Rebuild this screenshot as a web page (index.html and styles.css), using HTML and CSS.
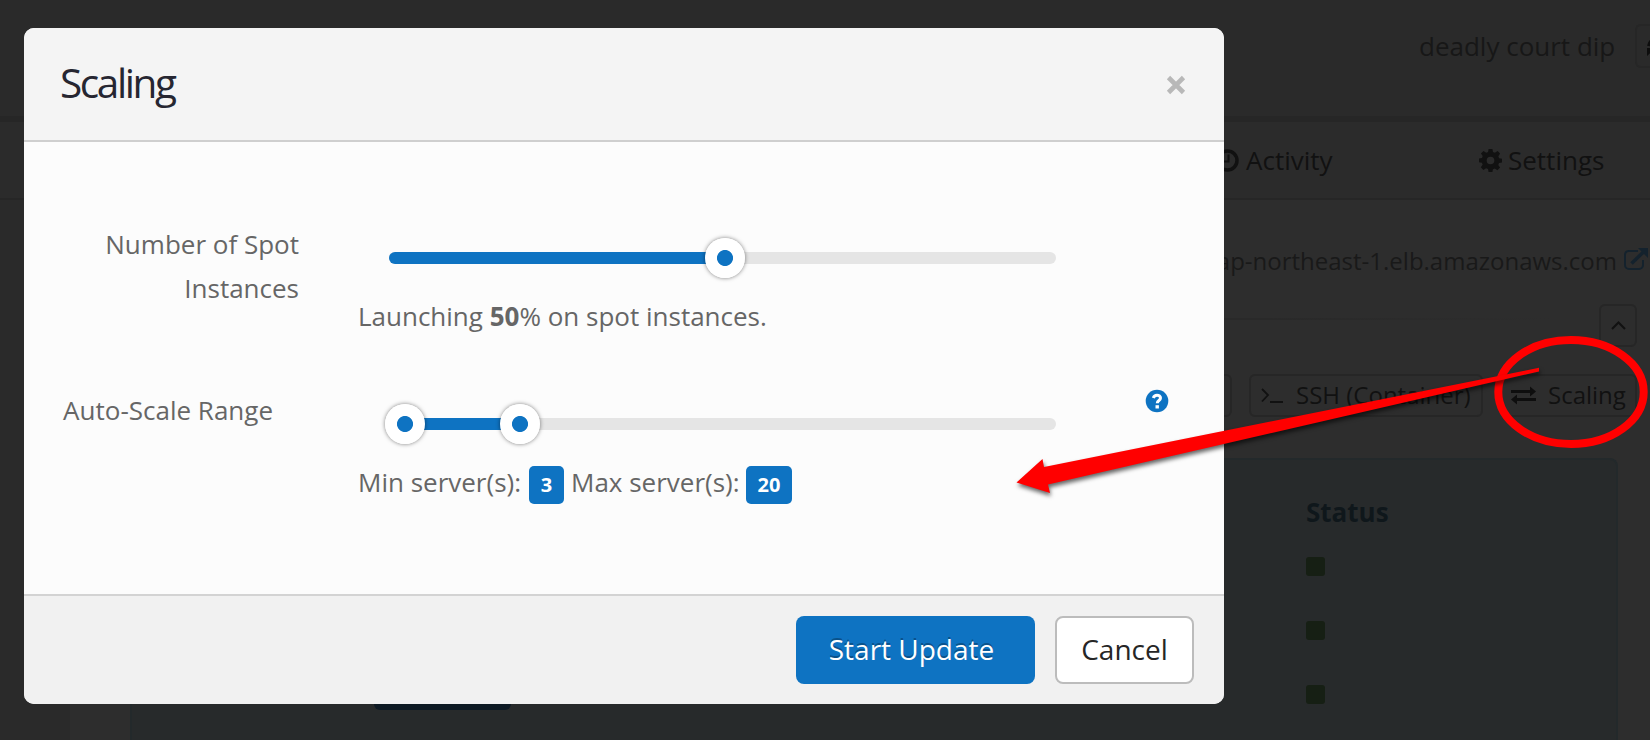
FILE: index.html
```html
<!DOCTYPE html>
<html lang="en">
<head>
<meta charset="utf-8">
<title>Scaling</title>
<link rel="stylesheet" href="styles.css">
</head>
<body>
<div class="page">
  <header class="topbar">
    <span class="app-name">deadly court dip</span>
    <span class="refresh">
      <svg width="22" height="22" viewBox="0 0 22 22"><path d="M2 10A9 9 0 0 1 17 5M20 12A9 9 0 0 1 5 17" fill="none" stroke="#0d0d0d" stroke-width="4"/><path d="M0 12h9l-9 8zM22 2v8h-8z" fill="#0d0d0d"/></svg>
    </span>
  </header>
  <nav class="tabs">
    <a class="tab tab-activity"><svg width="23" height="23" viewBox="0 0 23 23"><circle cx="11.500" cy="11.500" r="9.500" fill="none" stroke="#111" stroke-width="3.500"/><path d="M12.500 5.500v7H8" fill="none" stroke="#111" stroke-width="2"/></svg><span>Activity</span></a>
    <a class="tab tab-settings"><svg width="23" height="23" viewBox="0 0 24 24"><path fill="#111" fill-rule="evenodd" d="M10 0h4l.6 3.200 2 .8L19.400 2.200l2.600 2.600-1.800 2.800.8 2 3 .5v4l-3.100.6-.8 2 1.900 2.700-2.800 2.800-2.700-1.900-2 .8L14 24h-4l-.6-3.200-2-.8-2.800 1.900-2.700-2.800 1.900-2.700-.8-2-3-.5v-4l3.100-.6.8-2L2 4.800l2.700-2.700 2.800 1.900 2-.8zM12 8a4 4 0 1 0 0 8 4 4 0 0 0 0-8z"/></svg><span>Settings</span></a>
  </nav>
  <main class="content">
    <div class="endpoint">
      <span>ap-northeast-1.elb.amazonaws.com</span>
      <svg width="26" height="24" viewBox="0 0 26 24"><path d="M15 4H5.500A4 4 0 0 0 2 8v10a4 4 0 0 0 4 4h10a4 4 0 0 0 4-4v-5" fill="none" stroke="#14222d" stroke-width="2"/><path d="M8.500 16.500 21 4.500" stroke="#14222d" stroke-width="3.500"/><path d="M15 1h10v10z" fill="#14222d"/></svg>
    </div>
    <div class="divider-row">
      <div class="rule"></div>
      <span class="btn-dim collapse"><svg width="15" height="9" viewBox="0 0 15 9"><path d="m1 8 6.500-6.500L14 8" fill="none" stroke="#111" stroke-width="2"/></svg></span>
    </div>
    <div class="actions">
      <span class="btn-dim spare"></span>
      <span class="btn-dim ssh"><svg width="23" height="17" viewBox="0 0 23 17"><path d="m1 2 6 6-6 6.500M9 15h13" fill="none" stroke="#111" stroke-width="1.800"/></svg><span>SSH (Container)</span></span>
      <span class="btn-dim scale"><svg width="25" height="19" viewBox="0 0 25 19"><path fill="#0e0e0e" d="M0 4h19V.5l6 5-6 5V7H0zM25 12v3H6v3.500l-6-5 6-5V12z"/></svg><span>Scaling</span></span>
    </div>
    <section class="nodes">
      <div class="node-button"></div>
      <div class="status-col">
        <b class="status-title">Status</b>
        <i class="led"></i>
        <i class="led"></i>
        <i class="led"></i>
      </div>
    </section>
  </main>
</div>

<div class="modal">
  <div class="modal-header">
    <h1 class="modal-title">Scaling</h1>
    <svg class="close" width="20" height="20" viewBox="0 0 20 20"><path d="m2.500 2.500 15 15M17.500 2.500l-15 15" stroke="#b8b8b8" stroke-width="4.600"/></svg>
  </div>
  <div class="modal-body">
    <div class="field">
      <div class="field-label spot-label">Number of Spot<br>Instances</div>
      <div class="field-control">
        <div class="track"><div class="fill fill-spot"></div><div class="handle handle-spot"></div></div>
        <div class="caption caption-spot">Launching <b>50</b>% on spot instances.</div>
      </div>
    </div>
    <div class="field">
      <div class="field-label range-label">Auto-Scale Range</div>
      <div class="field-control">
        <div class="track"><div class="fill fill-range"></div><div class="handle handle-min"></div><div class="handle handle-max"></div></div>
        <div class="caption range-caption"><span class="min-text">Min server(s):</span><span class="badge badge-min">3</span><span class="max-text">Max server(s):</span><span class="badge badge-max">20</span></div>
      </div>
      <svg class="help" width="24" height="24" viewBox="0 0 24 24"><circle cx="12" cy="12" r="11.300" fill="#0e73c2"/><path d="M8.300 8.900C9 6.900 10.300 6.200 12 6.200c2 0 3.500 1.200 3.500 2.800 0 2.600-3.200 2.400-3.200 5.200" fill="none" stroke="#fff" stroke-width="3"/><path d="M10.500 16.200h3.400v3.300h-3.400z" fill="#fff"/></svg>
    </div>
  </div>
  <div class="modal-footer">
    <button class="btn btn-primary">Start Update</button>
    <button class="btn btn-cancel">Cancel</button>
  </div>
</div>

<svg class="annotation" width="1650" height="740" viewBox="0 0 1650 740">
  <ellipse cx="1571" cy="392" rx="72.700" ry="52" fill="none" stroke="#f00" stroke-width="8"/>
  <path class="arrow" fill="#f00" d="M1016.500 482.500 1042.500 459 1044 467 1539 367.800V371.500L1048 484.500 1050 493z"/>
</svg>
</body>
</html>
```

FILE: styles.css
```css
* { box-sizing: border-box; }

body {
  margin: 0;
  width: 1650px;
  height: 740px;
  overflow: hidden;
  position: relative;
  font-family: "Open Sans", sans-serif;
  font-size: 26px;
  background: #2a2a2a;
}

svg { display: block; flex: none; }

/* Dimmed page behind the dialog */
.page {
  height: 740px;
  display: flex;
  flex-direction: column;
  overflow: hidden;
  color: #111;
  white-space: nowrap;
}

.topbar {
  height: 116px;
  flex: none;
  display: flex;
  justify-content: flex-end;
  padding-top: 24px;
}

.app-name {
  width: 216px;
  line-height: 44px;
  color: #171717;
}

.refresh {
  width: 15px;
  height: 44px;
  border: 2px solid #262626;
  border-right: 0;
  border-radius: 6px 0 0 6px;
  padding: 10px 0 0 10px;
  overflow: hidden;
}

.tabs {
  height: 84px;
  flex: none;
  display: flex;
  padding-left: 1216px;
  border-top: 6px solid #262626;
  border-bottom: 2px solid #262626;
  background: #2b2b2b;
}

.tab {
  display: flex;
  align-items: center;
  gap: 7px;
  height: 78px;
}

.tab span {
  padding-bottom: 3px;
}

.tab svg { margin-bottom: 1px; }

.tab-activity { width: 263px; }
.tab-settings { gap: 6px; }

.content {
  flex: 1;
  margin-left: 70px;
  background: #2d2d2d;
  display: flex;
  flex-direction: column;
}

.endpoint {
  height: 104px;
  flex: none;
  display: flex;
  justify-content: flex-end;
  align-items: center;
  gap: 6px;
  padding-top: 16px;
  padding-right: 1px;
  color: #191919;
  font-size: 24px;
}

.endpoint svg { margin-bottom: 2px; }

.divider-row {
  display: flex;
  justify-content: flex-end;
  gap: 47px;
  height: 70px;
  flex: none;
  padding-right: 13px;
}

.rule {
  width: 1422px;
  height: 2px;
  margin-top: 14px;
  background: linear-gradient(90deg, #292929 80%, #2d2d2d);
}

.btn-dim {
  display: flex;
  align-items: center;
  height: 43px;
  flex: none;
  border: 2px solid #262626;
  border-radius: 6px;
}

.collapse {
  width: 38px;
  justify-content: center;
}

.actions {
  display: flex;
  justify-content: flex-end;
  gap: 17px;
  height: 84px;
  flex: none;
  padding-right: 13px;
  font-size: 24px;
}

.actions span span { padding-bottom: 2px; }

.spare { width: 120px; }

.ssh {
  width: 234px;
  padding-left: 10px;
  gap: 12px;
}

.scale {
  width: 137px;
  padding-left: 9px;
  gap: 12px;
}

.nodes {
  flex: 1;
  margin: 0 32px 0 60px;
  border: 2px solid #23292b;
  border-bottom: 0;
  border-radius: 8px 8px 0 0;
  background: #272a2b;
  display: flex;
  align-items: flex-start;
}

.node-button {
  width: 137px;
  height: 50px;
  margin: 200px 0 0 242px;
  border-radius: 6px;
  background: #0e1a24;
}

.status-col {
  margin-left: 795px;
  padding-top: 30px;
  display: flex;
  flex-direction: column;
}

.status-title {
  color: #0f171b;
  line-height: 44px;
  margin-bottom: 23px;
}

.led {
  width: 19px;
  height: 19px;
  margin-bottom: 45px;
  border-radius: 3px;
  background: #161f14;
}

/* Dialog */
.modal {
  position: absolute;
  left: 24px;
  top: 28px;
  width: 1200px;
  height: 676px;
  display: flex;
  flex-direction: column;
  border-radius: 10px;
  overflow: hidden;
  background: #fcfcfc;
  color: #666;
  white-space: nowrap;
}

.modal-header {
  height: 114px;
  flex: none;
  display: flex;
  align-items: center;
  justify-content: space-between;
  padding: 0 38px 0 36px;
  background: #f4f4f4;
  border-bottom: 2px solid #cfcfcf;
}

.modal-title {
  margin: 0;
  padding-bottom: 3px;
  font-size: 40.500px;
  font-weight: 400;
  letter-spacing: -2.400px;
  color: #262631;
}

.close { margin-top: 2px; }

.modal-body {
  flex: 1;
  padding-top: 80px;
}

.field {
  display: flex;
  align-items: flex-start;
  height: 166px;
}

.field-label {
  width: 275px;
  line-height: 44px;
  text-align: right;
  flex: none;
}

.range-label { padding-right: 26px; }

.field-control {
  width: 721px;
  padding-top: 30px;
  margin-left: 59px;
}

.track {
  position: relative;
  width: 667px;
  height: 12px;
  margin-left: 31px;
  border-radius: 6px;
  background: #e5e5e5;
}

.fill {
  height: 12px;
  border-radius: 6px;
  background: #0e73c2;
}

.fill-spot { width: 336px; }
.fill-range { width: 131px; }

.handle {
  position: absolute;
  top: -14px;
  width: 40px;
  height: 40px;
  border-radius: 50%;
  background: radial-gradient(circle, #0e73c2 7.600px, #fff 8.400px);
  box-shadow: 0 0 4px rgba(0, 0, 0, .5);
}

.handle-spot { left: 316px; }
.handle-min { left: -4px; }
.handle-max { left: 111px; }

.caption {
  line-height: 44px;
  margin-top: 30px;
}

.range-caption { display: flex; }
.min-text { width: 171px; }
.max-text { width: 175px; }

.badge {
  height: 38px;
  margin-top: 6px;
  border-radius: 5px;
  background: #0e73c2;
  color: #fff;
  font-size: 20px;
  font-weight: 700;
  line-height: 38px;
  text-align: center;
}

.badge-min { width: 35px; margin-right: 7px; }
.badge-max { width: 46px; }

.help { margin: 1px 0 0 66px; }

.modal-footer {
  height: 110px;
  flex: none;
  display: flex;
  justify-content: flex-end;
  gap: 20px;
  padding: 20px 30px 0 0;
  border-top: 2px solid #d3d3d3;
  background: #f1f1f1;
}

.btn {
  height: 68px;
  padding: 0 0 2px;
  border-radius: 8px;
  font-family: inherit;
  font-size: 28px;
}

.btn-primary {
  width: 239px;
  padding-right: 8px;
  border: 0;
  background: #0e73c2;
  color: #fff;
  text-shadow: 0 -2px 0 rgba(0, 0, 0, .3);
}

.btn-cancel {
  width: 139px;
  border: 2px solid #bcbcbc;
  background: #fff;
  color: #262626;
}

/* Callout drawn over everything */
.annotation {
  position: absolute;
  left: 0;
  top: 0;
}

.arrow { filter: drop-shadow(1px 3px 2px rgba(0, 0, 0, .6)); }
```
